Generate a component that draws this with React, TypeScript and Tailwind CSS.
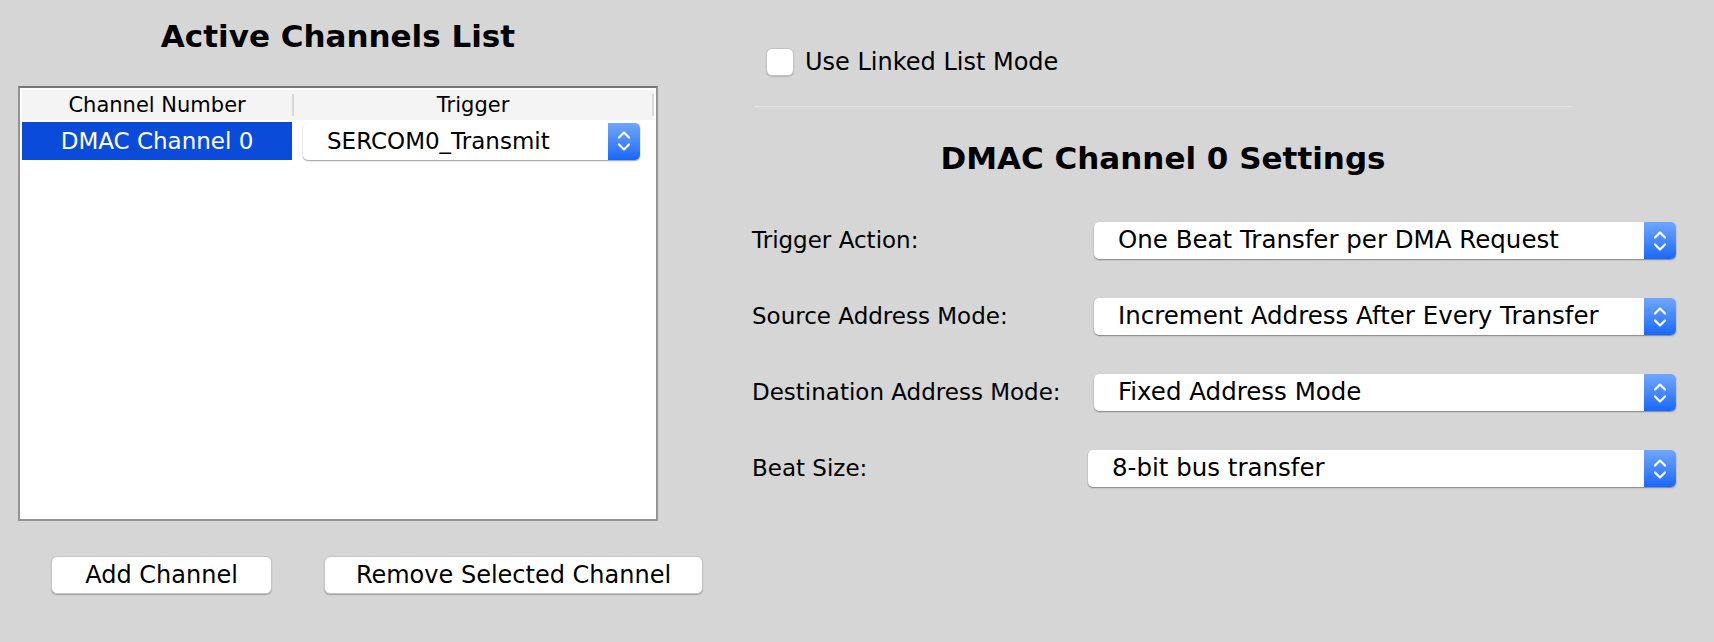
import React from "react";

const font = { fontFamily: '"DejaVu Sans", Verdana, sans-serif' };

function Chevrons() {
  return (
    <svg width="14" height="24" viewBox="0 0 14 24" fill="none">
      <path d="M2 8.5 L7 3.5 L12 8.5" stroke="white" strokeWidth="2.2" strokeLinecap="round" strokeLinejoin="round" />
      <path d="M2 15.5 L7 20.5 L12 15.5" stroke="white" strokeWidth="2.2" strokeLinecap="round" strokeLinejoin="round" />
    </svg>
  );
}

function Combo({ value, width, pad = "pl-[24px]", text = "text-[24.5px]" }: { value: string; width: string; pad?: string; text?: string }) {
  return (
    <div className={`relative flex h-[37px] ${width} shrink-0 items-center rounded-[5px] bg-white shadow-[0_1px_1.5px_rgba(0,0,0,0.4)]`}>
      <span className={`${pad} ${text} leading-none text-black`}>{value}</span>
      <div className="absolute right-0 top-0 flex h-full w-[32px] items-center justify-center rounded-r-[5px] bg-gradient-to-b from-[#6fa6ff] to-[#1667ff]">
        <Chevrons />
      </div>
    </div>
  );
}

function Button({ label, width }: { label: string; width: string }) {
  return (
    <button className={`h-[38px] ${width} rounded-[6px] border border-[#c4c4c4] bg-white text-[24px] leading-none text-black shadow-[0_1px_1px_rgba(0,0,0,0.25)]`}>
      {label}
    </button>
  );
}

const settings = [
  { label: "Trigger Action:", value: "One Beat Transfer per DMA Request", labelW: "w-[342px]", comboW: "w-[582px]" },
  { label: "Source Address Mode:", value: "Increment Address After Every Transfer", labelW: "w-[342px]", comboW: "w-[582px]" },
  { label: "Destination Address Mode:", value: "Fixed Address Mode", labelW: "w-[342px]", comboW: "w-[582px]" },
  { label: "Beat Size:", value: "8-bit bus transfer", labelW: "w-[336px]", comboW: "w-[588px]" },
];

export default function App() {
  return (
    <div style={font} className="flex h-[642px] w-[1714px] bg-[#d6d6d6] text-black">
      {/* left: channel list */}
      <div className="w-[752px] shrink-0 pl-[18px]">
        <h1 className="mt-[18px] h-[36px] w-[640px] text-center text-[31px] font-bold leading-[36px]">Active Channels List</h1>
        <div className="mt-[32px] h-[435px] w-[640px] border-2 border-[#939393] border-t-[#767676] bg-white p-[2px]">
          <div className="flex h-[30px] items-center bg-[#f4f4f4] text-[21px] leading-none">
            <div className="flex h-[22px] w-[271px] items-center justify-center">Channel Number</div>
            <div className="h-[22px] w-[2px] bg-[#d9d9d9]" />
            <div className="flex w-[359px] items-center justify-center">Trigger</div>
            <div className="h-[22px] w-[2px] bg-[#d9d9d9]" />
          </div>
          <div className="mt-[2px] flex h-[38px] items-center">
            <div className="flex h-full w-[270px] items-center justify-center bg-[#0a4cd9] text-[23px] leading-none text-white">DMAC Channel 0</div>
            <div className="ml-[11px]">
              <Combo value="SERCOM0_Transmit" width="w-[337px]" text="text-[23px]" />
            </div>
          </div>
        </div>
        <div className="mt-[35px] flex gap-[52px] pl-[33px]">
          <Button label="Add Channel" width="w-[221px]" />
          <Button label="Remove Selected Channel" width="w-[379px]" />
        </div>
      </div>

      {/* right: channel settings */}
      <div className="w-[924px] shrink-0">
        <label className="mt-[48px] flex h-[28px] items-center pl-[14px]">
          <span className="h-[28px] w-[28px] rounded-[6px] border border-[#c2c2c2] bg-white shadow-[0_1px_1px_rgba(0,0,0,0.15)]" />
          <span className="ml-[11px] text-[24px] leading-none">Use Linked List Mode</span>
        </label>
        <div className="ml-[2px] mt-[30px] h-px w-[818px] bg-[#e2e2e2]" />
        <h2 className="ml-[2px] mt-[33px] h-[36px] w-[818px] text-center text-[31px] font-bold leading-[36px]">DMAC Channel 0 Settings</h2>
        <div className="mt-[46px] flex flex-col gap-[38px]">
          {settings.map((s) => (
            <div key={s.label} className="flex h-[38px] items-start">
              <div className={`${s.labelW} flex h-[37px] shrink-0 items-center text-[23px] leading-none`}>{s.label}</div>
              <Combo value={s.value} width={s.comboW} />
            </div>
          ))}
        </div>
      </div>
    </div>
  );
}
